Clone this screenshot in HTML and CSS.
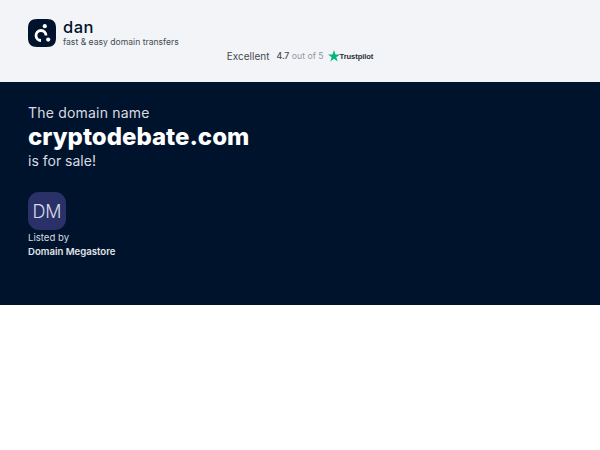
FILE: index.html
```html
<!DOCTYPE html>
<html lang="en">
<head>
<meta charset="utf-8">
<title>cryptodebate.com is for sale</title>
<link rel="stylesheet" href="styles.css">
</head>
<body>
<header class="top">
  <div class="brand">
    <svg class="logo" width="28" height="28" viewBox="0 0 28 28" aria-hidden="true">
      <path d="M9 0H19C25 0 28 3 28 9V19C28 25 25 28 19 28H9C3 28 0 25 0 19V9C0 3 3 0 9 0Z" fill="#00132d"/>
      <circle cx="16.8" cy="7.2" r="2.1" fill="#fff"/>
      <path d="M18 16.5A5 5 0 1 0 13 21.5" fill="none" stroke="#fff" stroke-width="2.8"/>
      <circle cx="20.2" cy="20.6" r="2.1" fill="#fff"/>
    </svg>
    <div class="brand-text">
      <div class="brand-name">dan</div>
      <div class="brand-tag">fast &amp; easy domain transfers</div>
    </div>
  </div>
  <div class="rating">
    <span class="excellent">Excellent</span>
    <span class="score"><b>4.7</b> out of 5</span>
    <span class="tp">
      <svg width="12" height="12" viewBox="0 0 24 24" aria-hidden="true"><path d="M12 0l2.9 8.9H24l-7.4 5.4 2.8 8.9L12 17.7l-7.4 5.5 2.8-8.9L0 8.9h9.1z" fill="#00b67a"/></svg>
      <span class="tp-name">Trustpilot</span>
    </span>
  </div>
</header>
<section class="hero">
  <p class="line line-wide">The domain name</p>
  <h1 class="domain">cryptodebate.com</h1>
  <p class="line">is for sale!</p>
  <div class="avatar">DM</div>
  <p class="listed">Listed by</p>
  <p class="seller">Domain Megastore</p>
</section>
</body>
</html>
```
FILE: styles.css
```css
* { box-sizing: border-box; }
html, body { margin: 0; padding: 0; background: #fff; }
body { font-family: Inter, "Liberation Sans", sans-serif; }
p, h1 { margin: 0; }
.top { height: 82px; background: #f2f4f7; padding: 18px 28px 0; color: #00132d; }
.brand { display: flex; align-items: center; gap: 7px; height: 29px; }
.logo { display: block; flex: none; }
.brand-name { font-size: 16.5px; font-weight: 500; line-height: 17px; letter-spacing: .5px; margin-top: 1px; }
.brand-tag { font-size: 8.6px; line-height: 12px; color: #444b57; }
.rating { display: flex; justify-content: center; align-items: center; margin-top: 2px; height: 14px; color: #454a52; }
.excellent { font-size: 10px; margin-right: 7px; }
.score { font-size: 8.7px; color: #92969d; margin-right: 4px; }
.score b { font-weight: 500; color: #454a52; }
.tp { display: inline-flex; align-items: center; }
.tp-name { font-family: "Liberation Sans", sans-serif; font-size: 7.6px; font-weight: 700; letter-spacing: -.1px; color: #2a2f36; }
.hero { height: 223px; background: #00132d; padding: 22px 28px 0; color: #fff; }
.line { font-size: 14px; line-height: 18px; color: #d9dbe0; }
.line-wide { letter-spacing: .2px; }
.domain { font-size: 24px; font-weight: 800; line-height: 30px; color: #fff; }
.avatar { width: 38px; height: 38px; margin-top: 22px; padding-top: 1px; border-radius: 11px; background: #2a3168; color: #d8dcea; font-size: 18px; font-weight: 300; display: flex; align-items: center; justify-content: center; }
.listed { font-size: 9.6px; line-height: 12px; margin-top: 2px; color: #d9dbe0; }
.seller { font-size: 9.6px; font-weight: 600; line-height: 12px; margin-top: 2px; color: #e2e5ea; }
```
